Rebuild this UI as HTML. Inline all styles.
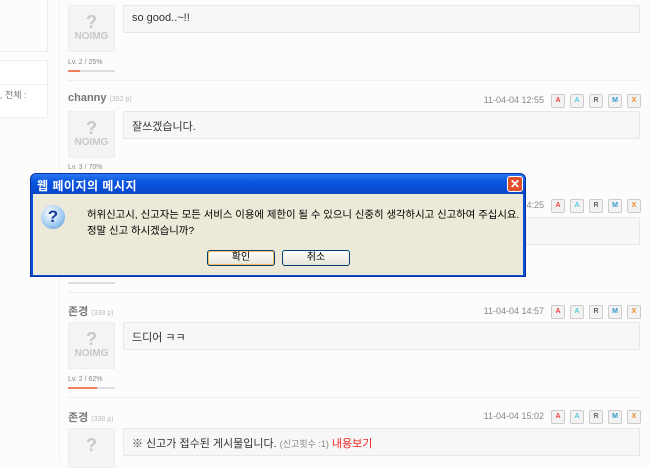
<!DOCTYPE html><html><head><meta charset="utf-8"><style>
*{margin:0;padding:0;box-sizing:border-box}
body{width:650px;height:460px;overflow:hidden;background:#fcfcfc;font-family:"Liberation Sans","Noto Sans CJK KR",sans-serif;position:relative}
.a{position:absolute}
.av{position:absolute;left:68px;width:47px;height:47px;background:#f4f4f4;border:1px solid #eee;text-align:center;color:#c8c8c8;font-weight:bold}
.av b{display:block;font-size:18px;margin-top:7px;line-height:18px}
.av i{display:block;font-style:normal;font-size:10px;line-height:12px}
.cb{position:absolute;left:123px;width:517px;height:28px;background:#f7f7f7;border:1px solid #e8e8e8;font-size:11px;color:#333;padding:6px 8px}
.lv{position:absolute;left:68px;font-size:7px;color:#888}
.bar{position:absolute;left:68px;width:47px;height:2px;background:#ddd}
.bar span{display:block;height:2px;background:#f08060}
.sep{position:absolute;left:68px;width:572px;height:1px;background:#eee}
.nm{position:absolute;left:68px;font-size:11px;color:#777;font-weight:bold}
.nm small{font-size:7px;color:#bbb;font-weight:normal}
.dt{position:absolute;left:480px;width:64px;text-align:right;font-size:9px;color:#888}
.ic{position:absolute;width:14px;height:14px;border:1px solid #ccc;border-radius:2px;background:#f2f2f2;font-size:7px;text-align:center;line-height:12px;font-weight:bold}
</style></head><body>
<div class="a" style="left:0;top:0;width:48px;height:52px;border:1px solid #eee;border-left:none;border-top:none"></div>
<div class="a" style="left:0;top:60px;width:48px;height:58px;border:1px solid #eee;border-left:none;background:#fff"></div>
<div class="a" style="left:0;top:84px;width:48px;height:1px;background:#eee"></div>
<div class="a" style="left:0;top:88px;font-size:9px;color:#777">, 전체 :</div>
<div class="a" style="left:59px;top:0;width:1px;height:460px;background:#f0f0f0"></div>

<div class="av" style="top:5px"><b>?</b><i>NOIMG</i></div>
<div class="cb" style="top:5px">so good..~!!</div>
<div class="lv" style="top:59px">Lv. 2 / 25%</div>
<div class="bar" style="top:70px"><span style="width:12px"></span></div>
<div class="sep" style="top:80px"></div>

<div class="nm" style="top:92px">channy <small>(352 p)</small></div>
<div class="dt" style="top:95px">11-04-04 12:55</div>
<div class="av" style="top:111px"><b>?</b><i>NOIMG</i></div>
<div class="cb" style="top:111px">잘쓰겠습니다.</div>
<div class="lv" style="top:164px">Lv. 3 / 70%</div>

<div class="dt" style="top:200px">11-04-04 14:25</div>
<div class="cb" style="top:217px"></div>
<div class="bar" style="top:282px;background:#ddd"></div>
<div class="sep" style="top:292px"></div>

<div class="nm" style="top:303px">존경 <small>(338 p)</small></div>
<div class="dt" style="top:306px">11-04-04 14:57</div>
<div class="av" style="top:322px"><b>?</b><i>NOIMG</i></div>
<div class="cb" style="top:322px">드디어 ㅋㅋ</div>
<div class="lv" style="top:376px">Lv. 2 / 62%</div>
<div class="bar" style="top:387px"><span style="width:29px"></span></div>
<div class="sep" style="top:397px"></div>

<div class="nm" style="top:409px">존경 <small>(338 p)</small></div>
<div class="dt" style="top:411px">11-04-04 15:02</div>
<div class="av" style="top:428px;height:40px"><b>?</b></div>
<div class="cb" style="top:428px">※ 신고가 접수된 게시물입니다. <span style="font-size:9px;color:#888">(신고횟수 :1)</span> <span style="color:#e22">내용보기</span></div>

<div id="ics"></div>
<script>
var ys=[94,199,305,410],xs=[551,570,589,608,627],c=['#e44','#5cd','#666','#39c','#e82'],t=['A','A','R','M','X'];
var h='';ys.forEach(function(y){xs.forEach(function(x,i){h+='<div class="ic" style="left:'+x+'px;top:'+y+'px;color:'+c[i]+'">'+t[i]+'</div>'})});
document.getElementById('ics').innerHTML=h;
</script>

<div class="a" style="left:30px;top:173px;width:496px;height:104px;background:#0a4fd8;border-radius:6px 6px 0 0;border:1px solid #0831a0">
 <div class="a" style="left:0;top:0;width:494px;height:20px;background:linear-gradient(#2b78f0,#0a55e0 40%,#0846c8);border-radius:5px 5px 0 0"></div>
 <div class="a" style="left:6px;top:3px;color:#fff;font-size:12px;font-weight:bold;letter-spacing:0.5px">웹 페이지의 메시지</div>
 <div class="a" style="left:476px;top:2px;width:16px;height:16px;background:#e0502a;border:1px solid #fff;border-radius:3px;color:#fff;font-size:12px;line-height:14px;text-align:center;font-weight:bold">✕</div>
 <div class="a" style="left:2px;top:20px;width:490px;height:81px;background:#ece9d8"></div>
 <div class="a" style="left:10px;top:31px;width:24px;height:24px;border-radius:50%;background:radial-gradient(circle at 40% 35%,#fff,#9cc8f0 60%,#4a88d0);color:#1a3a9a;font-weight:bold;font-size:17px;text-align:center;line-height:24px">?</div>
 <div class="a" style="left:56px;top:32px;font-size:10.4px;color:#000;white-space:nowrap">허위신고시, 신고자는 모든 서비스 이용에 제한이 될 수 있으니 신중히 생각하시고 신고하여 주십시요.</div>
 <div class="a" style="left:56px;top:48px;font-size:10.4px;color:#000">정말 신고 하시겠습니까?</div>
 <div class="a" style="left:176px;top:76px;width:68px;height:16px;border:1px solid #003c74;border-radius:3px;background:linear-gradient(#fff,#e6e4d8);box-shadow:inset 0 0 0 1px #f0c060;font-size:10px;text-align:center;line-height:14px">확인</div>
 <div class="a" style="left:251px;top:76px;width:68px;height:16px;border:1px solid #003c74;border-radius:3px;background:linear-gradient(#fff,#e6e4d8);font-size:10px;text-align:center;line-height:14px">취소</div>
</div>
</body></html>
